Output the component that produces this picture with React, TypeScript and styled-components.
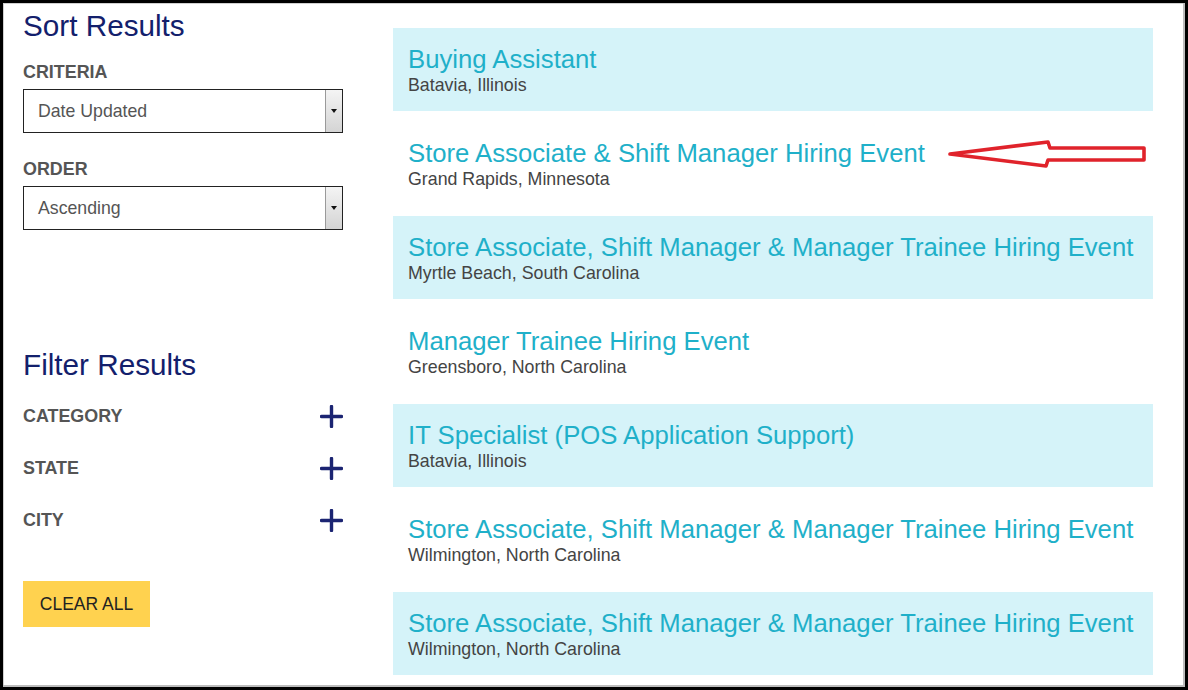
import React from 'react';
import styled, { createGlobalStyle } from 'styled-components';

const GlobalStyle = createGlobalStyle`
  html, body {
    margin: 0;
    padding: 0;
    background: #fff;
  }
  body, button {
    font-family: Arial, "Liberation Sans", Helvetica, sans-serif;
  }
`;

interface Job {
  title: string;
  location: string;
}

const jobs: Job[] = [
  { title: 'Buying Assistant', location: 'Batavia, Illinois' },
  { title: 'Store Associate & Shift Manager Hiring Event', location: 'Grand Rapids, Minnesota' },
  { title: 'Store Associate, Shift Manager & Manager Trainee Hiring Event', location: 'Myrtle Beach, South Carolina' },
  { title: 'Manager Trainee Hiring Event', location: 'Greensboro, North Carolina' },
  { title: 'IT Specialist (POS Application Support)', location: 'Batavia, Illinois' },
  { title: 'Store Associate, Shift Manager & Manager Trainee Hiring Event', location: 'Wilmington, North Carolina' },
  { title: 'Store Associate, Shift Manager & Manager Trainee Hiring Event', location: 'Wilmington, North Carolina' },
];

const Frame = styled.div`
  position: relative;
  box-sizing: border-box;
  width: 1188px;
  height: 690px;
  border: 3px solid #000;
  box-shadow: inset -2px -2px 0 #bdbdbd, inset 1px 1px 0 #d0d0d0;
  display: flex;
  align-items: flex-start;
  gap: 50px;
  padding: 6px 32px 0 20px;
  overflow: hidden;
`;

const Sidebar = styled.aside`
  width: 320px;
  flex-shrink: 0;
  display: flex;
  flex-direction: column;
`;

const Heading = styled.h2<{ $top?: number }>`
  margin: ${(p) => p.$top ?? 0}px 0 0;
  font-size: 29.7px;
  line-height: 34px;
  font-weight: normal;
  color: #13206c;
`;

const FieldGroup = styled.div<{ $top: number }>`
  display: flex;
  flex-direction: column;
  gap: 7px;
  margin-top: ${(p) => p.$top}px;
`;

const Label = styled.div`
  font-size: 17.9px;
  line-height: 20px;
  font-weight: bold;
  color: #555;
`;

const SelectBox = styled.div`
  position: relative;
  box-sizing: border-box;
  height: 44px;
  border: 1px solid #222;
  display: flex;
  align-items: center;
  padding-left: 14px;
  font-size: 17.7px;
  color: #555;
`;

const DropButton = styled.div`
  position: absolute;
  right: 0;
  top: 0;
  bottom: 0;
  width: 17px;
  box-sizing: border-box;
  border-left: 1px solid #9a9a9a;
  background: linear-gradient(to bottom, #f4f4f4, #d4d4d4);
  display: flex;
  align-items: center;
  justify-content: center;

  &::after {
    content: '';
    border-left: 3px solid transparent;
    border-right: 3px solid transparent;
    border-top: 4px solid #111;
  }
`;

const FilterList = styled.div`
  display: flex;
  flex-direction: column;
  gap: 20px;
  margin-top: 18px;
`;

const FilterRow = styled.div`
  height: 32px;
  display: flex;
  align-items: center;
  justify-content: space-between;
`;

const PlusIcon = () => (
  <svg width="23" height="23" viewBox="0 0 23 23">
    <path d="M11.5 1.5v20M1.5 11.5h20" stroke="#1b2472" strokeWidth="3.4" strokeLinecap="round" />
  </svg>
);

const ClearButton = styled.button`
  align-self: flex-start;
  margin-top: 45px;
  width: 127px;
  height: 46px;
  border: none;
  background: #ffd24f;
  font-size: 17.5px;
  color: #222;
  padding: 0;
  cursor: pointer;
`;

const Results = styled.main`
  width: 760px;
  flex-shrink: 0;
  display: flex;
  flex-direction: column;
  gap: 11px;
  margin-top: 19px;
`;

const JobCard = styled.div<{ $shaded: boolean }>`
  box-sizing: border-box;
  height: 83px;
  padding: 16px 15px 0;
  background: ${(p) => (p.$shaded ? '#d5f3f9' : '#fff')};
`;

const JobTitle = styled.a`
  display: block;
  font-size: 25.7px;
  line-height: 30px;
  color: #1fb0c9;
  text-decoration: none;
  white-space: nowrap;
`;

const JobLocation = styled.div`
  margin-top: 1px;
  font-size: 17.8px;
  line-height: 20px;
  color: #444;
`;

const Annotation = styled.svg`
  position: absolute;
  left: 937px;
  top: 129px;
`;

const App = () => {
  return (
    <>
      <GlobalStyle />
      <Frame>
        <Sidebar>
          <Heading>Sort Results</Heading>
          <FieldGroup $top={19}>
            <Label>CRITERIA</Label>
            <SelectBox>
              Date Updated
              <DropButton />
            </SelectBox>
          </FieldGroup>
          <FieldGroup $top={26}>
            <Label>ORDER</Label>
            <SelectBox>
              Ascending
              <DropButton />
            </SelectBox>
          </FieldGroup>

          <Heading $top={118}>Filter Results</Heading>
          <FilterList>
            {['CATEGORY', 'STATE', 'CITY'].map((name) => (
              <FilterRow key={name}>
                <Label>{name}</Label>
                <PlusIcon />
              </FilterRow>
            ))}
          </FilterList>
          <ClearButton>CLEAR ALL</ClearButton>
        </Sidebar>

        <Results>
          {jobs.map((job, i) => (
            <JobCard key={i} $shaded={i % 2 === 0}>
              <JobTitle>{job.title}</JobTitle>
              <JobLocation>{job.location}</JobLocation>
            </JobCard>
          ))}
        </Results>

        {/* red hand-drawn arrow pointing at the second result */}
        <Annotation width="214" height="42" viewBox="0 0 214 42">
          <polygon
            points="10,22 108,10 110,16 204,16 204,28 108,28 106,34"
            fill="none"
            stroke="#e0232b"
            strokeWidth="3.6"
            strokeLinejoin="round"
          />
        </Annotation>
      </Frame>
    </>
  );
};

export default App;
